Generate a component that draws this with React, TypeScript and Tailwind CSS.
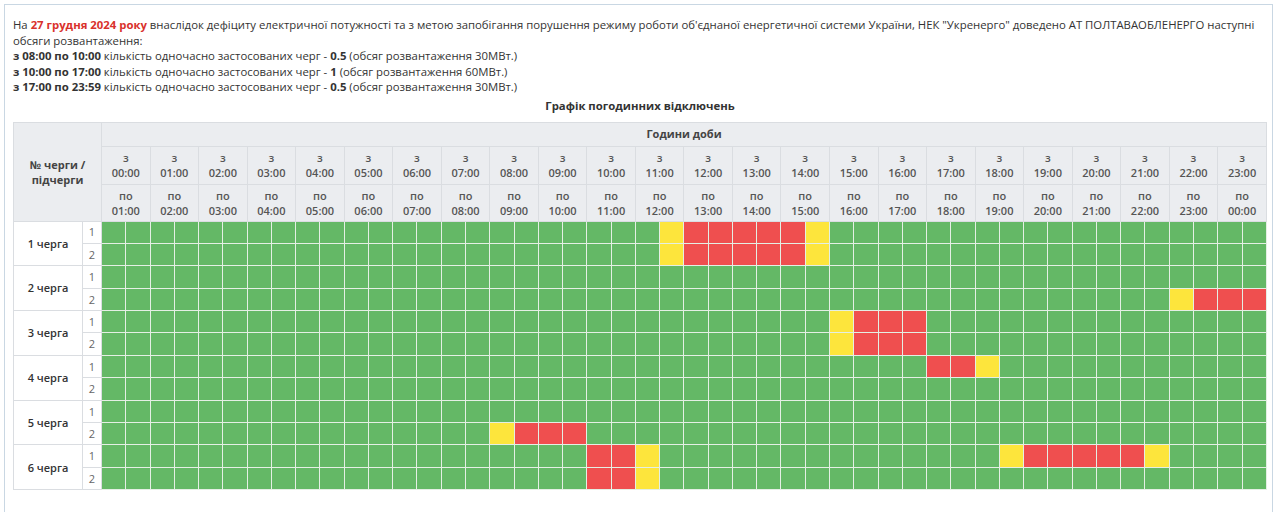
import React from 'react'

type Slot = 'g' | 'y' | 'r'

// 48 half-hour slots per sub-queue
function build(spans: [number, number, Slot][]): Slot[] {
  const out: Slot[] = Array(48).fill('g')
  spans.forEach(([from, to, c]) => {
    for (let i = from; i <= to; i++) out[i] = c
  })
  return out
}

const queues: { name: string; subs: Slot[][] }[] = [
  {
    name: '1 черга',
    subs: [
      build([[23, 23, 'y'], [24, 28, 'r'], [29, 29, 'y']]),
      build([[23, 23, 'y'], [24, 28, 'r'], [29, 29, 'y']]),
    ],
  },
  {
    name: '2 черга',
    subs: [build([]), build([[44, 44, 'y'], [45, 47, 'r']])],
  },
  {
    name: '3 черга',
    subs: [
      build([[30, 30, 'y'], [31, 33, 'r']]),
      build([[30, 30, 'y'], [31, 33, 'r']]),
    ],
  },
  {
    name: '4 черга',
    subs: [build([[34, 35, 'r'], [36, 36, 'y']]), build([])],
  },
  {
    name: '5 черга',
    subs: [build([]), build([[16, 16, 'y'], [17, 19, 'r']])],
  },
  {
    name: '6 черга',
    subs: [
      build([[20, 21, 'r'], [22, 22, 'y'], [37, 37, 'y'], [38, 42, 'r'], [43, 43, 'y']]),
      build([[20, 21, 'r'], [22, 22, 'y']]),
    ],
  },
]

const slotClass: Record<Slot, string> = {
  g: 'bg-[#64b866]',
  y: 'bg-[#fde53c]',
  r: 'bg-[#ef4f4f]',
}

const pad = (n: number) => String(n % 24).padStart(2, '0') + ':00'
const hours = Array.from({ length: 24 }, (_, i) => i)

export default function App() {
  return (
    <div
      className="min-h-screen bg-white pl-1 pt-1"
      style={{ fontFamily: '"Open Sans", "Noto Sans", sans-serif' }}
    >
      <div className="w-[1269px] border border-[#c9d7e3] pl-2 pr-[5px] pt-3 pb-10 text-[11.35px] leading-[15.5px] text-[#333]">
        <p>
          На <b className="font-bold text-[#d9312c]">27 грудня 2024 року</b> внаслідок дефіциту електричної
          потужності та з метою запобігання порушення режиму роботи об'єднаної енергетичної системи України, НЕК
          "Укренерго" доведено АТ ПОЛТАВАОБЛЕНЕРГО наступні обсяги розвантаження:
        </p>
        <p>
          <b className="font-bold">з 08:00 по 10:00</b> кількість одночасно застосованих черг - <b className="font-bold">0.5</b> (обсяг
          розвантаження 30МВт.)
        </p>
        <p>
          <b className="font-bold">з 10:00 по 17:00</b> кількість одночасно застосованих черг - <b className="font-bold">1</b> (обсяг
          розвантаження 60МВт.)
        </p>
        <p>
          <b className="font-bold">з 17:00 по 23:59</b> кількість одночасно застосованих черг - <b className="font-bold">0.5</b> (обсяг
          розвантаження 30МВт.)
        </p>
        <div className="mt-[3px] mb-[8px] text-center font-bold leading-4">Графік погодинних відключень</div>

        <table className="w-full table-fixed border-collapse text-[11px]">
          <colgroup>
            <col className="w-[69px]" />
            <col className="w-[19px]" />
            {Array.from({ length: 48 }, (_, i) => (
              <col key={i} />
            ))}
          </colgroup>
          <thead className="bg-[#ebedf0] text-[#555]">
            <tr className="h-[24px]">
              <th
                rowSpan={3}
                colSpan={2}
                className="border border-[#dadde1] px-1 text-center font-bold leading-[15px] text-[#444]"
              >
                № черги /<br />
                підчерги
              </th>
              <th colSpan={48} className="border border-[#dadde1] text-center font-bold text-[#444]">
                Години доби
              </th>
            </tr>
            <tr className="h-[38px]">
              {hours.map((h) => (
                <th key={h} colSpan={2} className="border border-[#dadde1] text-center font-semibold leading-[15px]">
                  з<br />
                  {pad(h)}
                </th>
              ))}
            </tr>
            <tr className="h-[37px]">
              {hours.map((h) => (
                <th key={h} colSpan={2} className="border border-[#dadde1] text-center font-semibold leading-[15px]">
                  по
                  <br />
                  {pad(h + 1)}
                </th>
              ))}
            </tr>
          </thead>
          <tbody>
            {queues.map((q) =>
              q.subs.map((slots, si) => (
                <tr key={q.name + si} className="h-[22.4px]">
                  {si === 0 && (
                    <td rowSpan={2} className="border border-[#dadde1] text-center font-semibold text-[#333]">
                      {q.name}
                    </td>
                  )}
                  <td className="border border-[#dadde1] text-center text-[#666]">{si + 1}</td>
                  {slots.map((s, i) => (
                    <td key={i} className={`border border-[#e4efe4] p-0 ${slotClass[s]}`} />
                  ))}
                </tr>
              ))
            )}
          </tbody>
        </table>
      </div>
    </div>
  )
}
